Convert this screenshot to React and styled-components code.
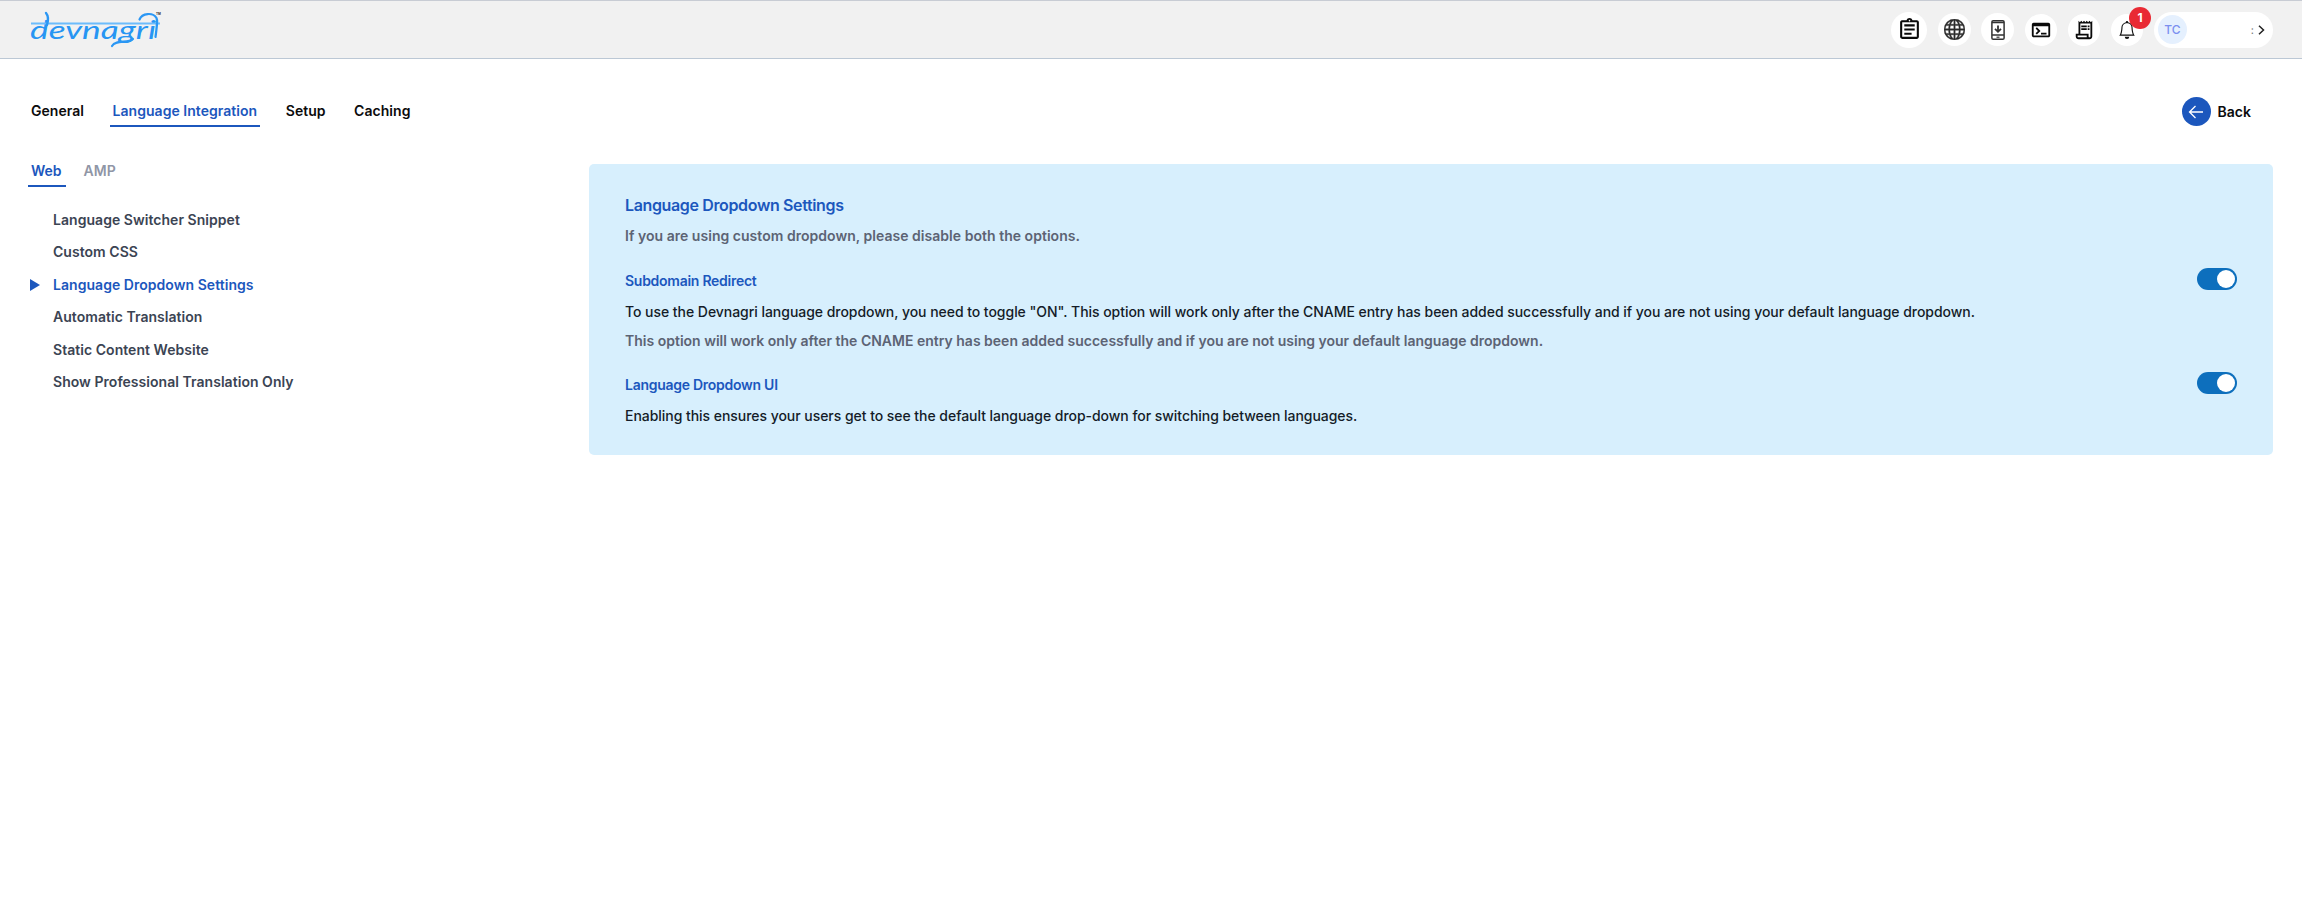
import React, { useState } from 'react';
import styled, { createGlobalStyle } from 'styled-components';
import {
  MdOutlineAssignment,
  MdOutlineTerminal,
  MdOutlineReceiptLong,
} from 'react-icons/md';
import { BsGlobe, BsBell } from 'react-icons/bs';

const GlobalStyle = createGlobalStyle`
  *, *::before, *::after { box-sizing: border-box; }
  body {
    margin: 0;
    background: #fff;
    color: #0b0b0c;
    font-family: Inter, "Liberation Sans", sans-serif;
    font-size: 14px;
    font-weight: 600;
    line-height: 20px;
  }
  button { font: inherit; color: inherit; border: 0; background: none; padding: 0; }
`;

const blue = '#1c57bd';

const Header = styled.header`
  display: flex;
  align-items: center;
  justify-content: space-between;
  height: 59px;
  padding: 0 29px 0 28px;
  background: #f1f1f1;
  border-top: 1px solid #c8ccd4;
  border-bottom: 1px solid #bcc8d5;
`;

const LogoSvg = styled.svg`
  display: block;
  width: 140px;
  height: 44px;
`;

const Actions = styled.div`
  display: flex;
  align-items: center;
`;

const IconButton = styled.button`
  position: relative;
  display: flex;
  align-items: center;
  justify-content: center;
  width: ${(p) => p.$size || 33}px;
  height: ${(p) => p.$size || 33}px;
  margin-right: ${(p) => p.$gap}px;
  border-radius: 50%;
  background: #fff;
  color: ${(p) => p.$color || '#0a0a0a'};
`;

const Badge = styled.span`
  position: absolute;
  top: -7px;
  left: 18px;
  width: 22px;
  height: 22px;
  border-radius: 50%;
  background: #e92a34;
  color: #fff;
  font-size: 12px;
  font-weight: 700;
  line-height: 22px;
  text-align: center;
`;

const Account = styled.button`
  display: flex;
  align-items: center;
  width: 119px;
  height: 36px;
  padding: 0 4px 0 4px;
  border-radius: 18px;
  background: #fff;
`;

const Avatar = styled.span`
  width: 29px;
  height: 29px;
  border-radius: 50%;
  background: #e5f0fe;
  color: #7b8ff0;
  font-size: 12px;
  font-weight: 500;
  line-height: 29px;
  text-align: center;
`;

const AccountName = styled.span`
  margin-left: auto;
  margin-right: 1px;
  color: #777;
  font-size: 11px;
  font-weight: 400;
`;

const TopRow = styled.div`
  display: flex;
  align-items: flex-start;
  justify-content: space-between;
  height: 68px;
  margin-top: 37px;
  padding: 0 51px 0 28px;
`;

const MainTabs = styled.nav`
  display: flex;
  gap: 22.5px;
`;

const SubTabs = styled.nav`
  display: flex;
  gap: 15px;
`;

const MainTab = styled.button`
  height: 31px;
  padding: 5px 3px 4px;
  border-bottom: 2px solid ${(p) => (p.$active ? blue : 'transparent')};
  color: ${(p) => (p.$active ? blue : '#0b0b0c')};
  letter-spacing: 0.04px;
  line-height: 20px;
`;

const SubTab = styled.button`
  height: 23px;
  padding: 0 4px 7px 3px;
  border-bottom: 2px solid ${(p) => (p.$active ? blue : 'transparent')};
  color: ${(p) => (p.$active ? blue : '#9096a6')};
  line-height: 14px;
`;

const BackButton = styled.button`
  display: flex;
  align-items: center;
  gap: 7px;
  margin-top: 1px;
`;

const BackCircle = styled.span`
  display: flex;
  align-items: center;
  justify-content: center;
  width: 29px;
  height: 29px;
  border-radius: 50%;
  background: ${blue};
`;

const Content = styled.main`
  display: grid;
  grid-template-columns: 560px 1fr;
  padding: 0 29px 0 28px;
  align-items: start;
`;

const Menu = styled.ul`
  display: flex;
  flex-direction: column;
  gap: 12.4px;
  margin: 23px 0 0;
  padding: 0;
  list-style: none;
`;

const MenuItem = styled.li`
  display: grid;
  grid-template-columns: 25px 1fr;
  align-items: center;
  height: 20px;
  color: ${(p) => (p.$active ? blue : '#3b4453')};
  letter-spacing: 0.04px;
`;

const Marker = styled.span`
  width: 0;
  height: 0;
  margin-left: 2px;
  border-left: 10px solid ${(p) => (p.$active ? blue : 'transparent')};
  border-top: 6.5px solid transparent;
  border-bottom: 6.5px solid transparent;
`;

const Panel = styled.section`
  height: 291px;
  margin-left: 1px;
  padding: 31px 36px 0;
  border-radius: 5px;
  background: #d7effd;
`;

const PanelTitle = styled.h2`
  margin: 0;
  color: ${blue};
  font-size: 16px;
  font-weight: 600;
  letter-spacing: -0.36px;
  line-height: 20px;
`;

const Hint = styled.p`
  margin: ${(p) => p.$top}px 0 0;
  color: #5c6374;
  letter-spacing: ${(p) => p.$spacing || 0}px;
`;

const Setting = styled.div`
  margin-top: ${(p) => p.$top}px;
`;

const SettingHead = styled.div`
  display: flex;
  justify-content: space-between;
  height: 24px;
`;

const SettingName = styled.h3`
  margin: 3px 0 0;
  color: ${blue};
  font-size: 14px;
  font-weight: 600;
  letter-spacing: -0.27px;
  line-height: 20px;
`;

const SettingText = styled.p`
  margin: 10px 0 0;
  color: #141c28;
  font-weight: 500;
  letter-spacing: -0.042px;
`;

const Switch = styled.button`
  display: flex;
  justify-content: ${(p) => (p.$on ? 'flex-end' : 'flex-start')};
  width: 40px;
  height: 22px;
  padding: 2px;
  border-radius: 11px;
  background: ${(p) => (p.$on ? '#0d6fbd' : '#9aa5b1')};
`;

const Knob = styled.span`
  width: 18px;
  height: 18px;
  border-radius: 50%;
  background: #fff;
`;

function Logo() {
  return (
    <LogoSvg viewBox="28 8 140 44">
      <text
        x="30"
        y="38.5"
        textLength="126"
        lengthAdjust="spacingAndGlyphs"
        fontFamily="Lato, sans-serif"
        fontStyle="italic"
        fontSize="25"
        fontWeight="400"
        fill="#2795f3"
      >
        devnagri
      </text>
      <g fill="none" stroke="#2b97f4" strokeLinecap="round">
        <path d="M31 23.5H160" strokeWidth="2.2" stroke="#6dbcfb" strokeLinecap="butt" />
        <path d="M46 13C48.500 16 48.500 20 47 25" strokeWidth="2.4" />
        <path d="M112 46C116 39 128 44 133 39" strokeWidth="2.200" />
        <path d="M139.500 19.500C142 13 153 12 156.500 18C157.500 20 157.500 22 155.500 37" strokeWidth="2.200" />
      </g>
      <text x="156" y="15" fontFamily="Inter, sans-serif" fontSize="3" fontWeight="700" fill="#333">
        TM
      </text>
    </LogoSvg>
  );
}

function PhoneDownloadIcon() {
  return (
    <svg width="14" height="20" viewBox="0 0 14 20" fill="none" stroke="#333" strokeWidth="1.5">
      <rect x="0.9" y="0.8" width="12.2" height="18.4" rx="1.3" />
      <path d="M1 2.5H13M1 15H13" />
      <path d="M7 5.500V11.500M4 8.800L7 11.800L10 8.800" strokeWidth="1.8" />
      <path d="M5.500 17.200H8.500" strokeWidth="1.2" />
    </svg>
  );
}

const menuItems = [
  'Language Switcher Snippet',
  'Custom CSS',
  'Language Dropdown Settings',
  'Automatic Translation',
  'Static Content Website',
  'Show Professional Translation Only',
];

function Toggle() {
  const [on, setOn] = useState(true);
  return (
    <Switch $on={on} role="switch" aria-checked={on} onClick={() => setOn(!on)}>
      <Knob />
    </Switch>
  );
}

export default function App() {
  return (
    <>
      <GlobalStyle />
      <Header>
        <Logo />
        <Actions>
          <IconButton $size={36} $gap={11}>
            <MdOutlineAssignment size={25} />
          </IconButton>
          <IconButton $gap={10} $color="#2b2b2b">
            <BsGlobe size={21} stroke="currentColor" strokeWidth={0.35} />
          </IconButton>
          <IconButton $gap={11}>
            <PhoneDownloadIcon />
          </IconButton>
          <IconButton $size={32} $gap={11}>
            <MdOutlineTerminal size={22} />
          </IconButton>
          <IconButton $size={32} $gap={11}>
            <MdOutlineReceiptLong size={22} />
          </IconButton>
          <IconButton $size={32} $gap={11} $color="#111">
            <BsBell size={18} />
            <Badge>1</Badge>
          </IconButton>
          <Account>
            <Avatar>TC</Avatar>
            <AccountName>:</AccountName>
            <svg width="14" height="14" viewBox="0 0 14 14" fill="none" stroke="#222" strokeWidth="1.5">
              <path d="M4 2.800L8.500 7L4 11.200" />
            </svg>
          </Account>
        </Actions>
      </Header>

      <TopRow>
        <MainTabs>
          <MainTab>General</MainTab>
          <MainTab $active>Language Integration</MainTab>
          <MainTab>Setup</MainTab>
          <MainTab>Caching</MainTab>
        </MainTabs>
        <BackButton>
          <BackCircle>
            <svg width="16" height="14" viewBox="0 0 16 14" fill="none" stroke="#fff" strokeWidth="1.3">
              <path d="M15 7H1.500M7.500 1L1.500 7L7.500 13" />
            </svg>
          </BackCircle>
          Back
        </BackButton>
      </TopRow>

      <Content>
        <div>
          <SubTabs>
            <SubTab $active>Web</SubTab>
            <SubTab>AMP</SubTab>
          </SubTabs>
          <Menu>
            {menuItems.map((item, i) => (
              <MenuItem key={item} $active={i === 2}>
                <Marker $active={i === 2} />
                {item}
              </MenuItem>
            ))}
          </Menu>
        </div>

        <Panel>
          <PanelTitle>Language Dropdown Settings</PanelTitle>
          <Hint $top={11} $spacing={0.03}>
            If you are using custom dropdown, please disable both the options.
          </Hint>
          <Setting $top={22}>
            <SettingHead>
              <SettingName>Subdomain Redirect</SettingName>
              <Toggle />
            </SettingHead>
            <SettingText>
              To use the Devnagri language dropdown, you need to toggle "ON". This option will work only after the CNAME
              entry has been added successfully and if you are not using your default language dropdown.
            </SettingText>
            <Hint $top={9}>
              This option will work only after the CNAME entry has been added successfully and if you are not using your
              default language dropdown.
            </Hint>
          </Setting>
          <Setting $top={21}>
            <SettingHead>
              <SettingName>Language Dropdown UI</SettingName>
              <Toggle />
            </SettingHead>
            <SettingText>
              Enabling this ensures your users get to see the default language drop-down for switching between languages.
            </SettingText>
          </Setting>
        </Panel>
      </Content>
    </>
  );
}
